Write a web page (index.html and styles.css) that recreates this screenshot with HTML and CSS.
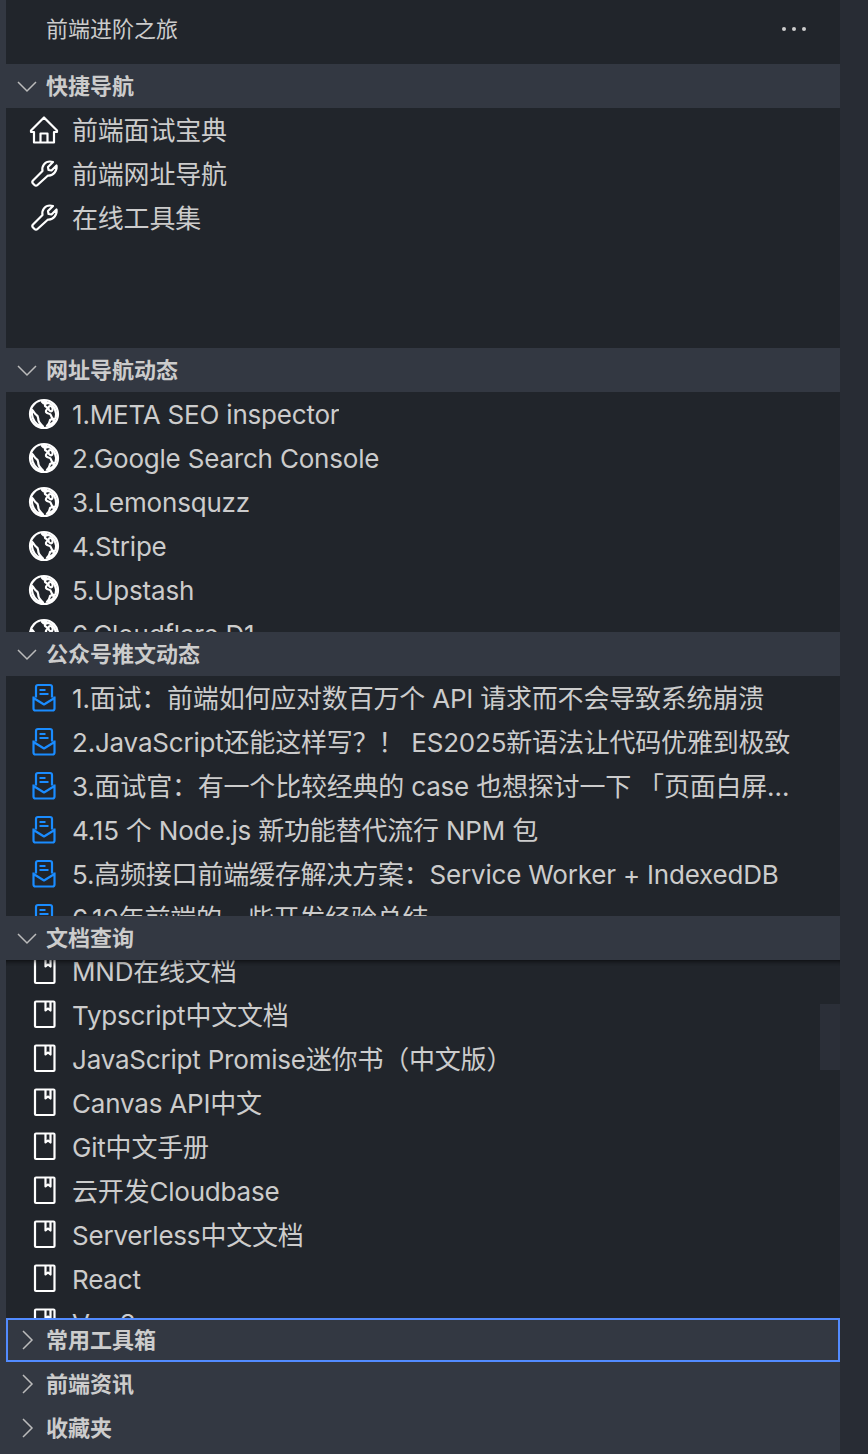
FILE: index.html
```html
<!DOCTYPE html>
<html lang="zh-CN">
<head>
  <meta charset="UTF-8">
  <meta name="viewport" content="width=device-width, initial-scale=1.0">
  <title>前端进阶之旅</title>
  <link rel="stylesheet" href="styles.css">
</head>
<body>
  <svg class="sprites" aria-hidden="true">
    <symbol id="i-open" viewBox="0 0 24 24"><path d="M3 8 12 17l9-9" /></symbol>
    <symbol id="i-closed" viewBox="0 0 24 24"><path d="M8 3 17 12 8 21" /></symbol>
    <symbol id="i-home" viewBox="0 0 32 32"><path d="M16 3.500 3 16.500v1.500h3v10.500h20V18h3v-1.500zM12.500 28.500V19.500h7v9" /></symbol>
    <symbol id="i-tool" viewBox="0 0 32 32"><path d="M5 22.500 14.500 13C13.500 8 17 3.500 22 3.500c1 0 2 .2 3 .5l-5 5 .5 3 3 .5 5-5c1 5-3 10.500-8.500 10L9.500 27c-1 1-2 1-3 0L5 25.500c-1-1-1-2 0-3z" /></symbol>
    <symbol id="i-globe" viewBox="0 0 32 32">
      <circle class="solid" cx="16" cy="16" r="14" />
      <path class="sea" d="M14 3.800c1 1.500 3 2.200 4.500 1.700V3.800zM20.500 4.800C18 5 16.500 6.500 17 8c1 1 2.500 1 2.500 2.500-.5 1.500-2 1.500-1.500 3.500 1 2 3 1 4.500 2.500 1 1.500 1 3.500 2.500 4.500l2.500-.5C29.500 14 26 7 20.500 4.800zM4.300 12C3 17 5 23 9.500 26.500c1.500 1 3.500 1.500 5.500 1.900-2-2.400-4-3.400-4.500-5.900-.5-2.500 0-4.500-2-5.500S6 13.500 4.300 12zM26.800 22.500c-1.800-1-3.800-1.500-4.800-.5-.5 2-.5 4-3 5.600 3.500-.6 6-2.600 7.800-5.100z" />
      <path class="solid" d="M22 8c2 0 3 2 2.500 4s-2.500 1.500-3.500 0-.5-4 1-4z" />
    </symbol>
    <symbol id="i-mail" viewBox="0 0 32 32">
      <path d="M8 15.500V5a2 2 0 0 1 2-2h12a2 2 0 0 1 2 2v10.500M5.500 14.500v12a2 2 0 0 0 2 2h17a2 2 0 0 0 2-2v-12M5.500 16 16 22.500 26.500 16" />
      <path d="M11.500 8h6M11.500 12h9" />
    </symbol>
    <symbol id="i-book" viewBox="0 0 32 32"><rect x="7" y="2.500" width="19.500" height="25.500" rx="1" /><path d="M17.500 2.500v9l2.500-2 2.500 2v-9" /></symbol>
  </svg>

  <div class="window">
    <div class="rail"></div>

    <main class="sidebar">
      <header class="title-bar">
        <span class="title">前端进阶之旅</span>
        <span class="more"><i></i><i></i><i></i></span>
      </header>

      <section class="panel">
        <h2 class="panel-head"><svg class="chev"><use href="#i-open"/></svg>快捷导航</h2>
        <div class="panel-body h-240">
          <div class="row"><svg class="ico"><use href="#i-home"/></svg><span>前端面试宝典</span></div>
          <div class="row"><svg class="ico"><use href="#i-tool"/></svg><span>前端网址导航</span></div>
          <div class="row"><svg class="ico"><use href="#i-tool"/></svg><span>在线工具集</span></div>
        </div>
      </section>

      <section class="panel">
        <h2 class="panel-head"><svg class="chev"><use href="#i-open"/></svg>网址导航动态</h2>
        <div class="panel-body h-240">
          <div class="row"><svg class="ico"><use href="#i-globe"/></svg><span>1.META SEO inspector</span></div>
          <div class="row"><svg class="ico"><use href="#i-globe"/></svg><span>2.Google Search Console</span></div>
          <div class="row"><svg class="ico"><use href="#i-globe"/></svg><span>3.Lemonsquzz</span></div>
          <div class="row"><svg class="ico"><use href="#i-globe"/></svg><span>4.Stripe</span></div>
          <div class="row"><svg class="ico"><use href="#i-globe"/></svg><span>5.Upstash</span></div>
          <div class="row"><svg class="ico"><use href="#i-globe"/></svg><span>6.Cloudflare D1</span></div>
        </div>
      </section>

      <section class="panel">
        <h2 class="panel-head"><svg class="chev"><use href="#i-open"/></svg>公众号推文动态</h2>
        <div class="panel-body h-240">
          <div class="row"><svg class="ico blue"><use href="#i-mail"/></svg><span>1.面试：前端如何应对数百万个 API 请求而不会导致系统崩溃</span></div>
          <div class="row"><svg class="ico blue"><use href="#i-mail"/></svg><span>2.JavaScript还能这样写？！ ES2025新语法让代码优雅到极致</span></div>
          <div class="row"><svg class="ico blue"><use href="#i-mail"/></svg><span>3.面试官：有一个比较经典的 case 也想探讨一下 「页面白屏如何排查」</span></div>
          <div class="row"><svg class="ico blue"><use href="#i-mail"/></svg><span>4.15 个 Node.js 新功能替代流行 NPM 包</span></div>
          <div class="row"><svg class="ico blue"><use href="#i-mail"/></svg><span>5.高频接口前端缓存解决方案：Service Worker + IndexedDB</span></div>
          <div class="row"><svg class="ico blue"><use href="#i-mail"/></svg><span>6.10年前端的一些开发经验总结</span></div>
        </div>
      </section>

      <section class="panel">
        <h2 class="panel-head"><svg class="chev"><use href="#i-open"/></svg>文档查询</h2>
        <div class="panel-body h-358 scrolled">
          <div class="row"><svg class="ico"><use href="#i-book"/></svg><span>MND在线文档</span></div>
          <div class="row"><svg class="ico"><use href="#i-book"/></svg><span>Typscript中文文档</span></div>
          <div class="row"><svg class="ico"><use href="#i-book"/></svg><span>JavaScript Promise迷你书（中文版）</span></div>
          <div class="row"><svg class="ico"><use href="#i-book"/></svg><span>Canvas API中文</span></div>
          <div class="row"><svg class="ico"><use href="#i-book"/></svg><span>Git中文手册</span></div>
          <div class="row"><svg class="ico"><use href="#i-book"/></svg><span>云开发Cloudbase</span></div>
          <div class="row"><svg class="ico"><use href="#i-book"/></svg><span>Serverless中文文档</span></div>
          <div class="row"><svg class="ico"><use href="#i-book"/></svg><span>React</span></div>
          <div class="row"><svg class="ico"><use href="#i-book"/></svg><span>Vue3</span></div>
          <div class="thumb"></div>
        </div>
      </section>

      <section class="panel">
        <h2 class="panel-head focused"><svg class="chev"><use href="#i-closed"/></svg>常用工具箱</h2>
      </section>
      <section class="panel">
        <h2 class="panel-head"><svg class="chev"><use href="#i-closed"/></svg>前端资讯</h2>
      </section>
      <section class="panel">
        <h2 class="panel-head"><svg class="chev"><use href="#i-closed"/></svg>收藏夹</h2>
      </section>
      <div class="tail"></div>
    </main>

    <div class="gutter"></div>
  </div>
</body>
</html>
```

FILE: styles.css
```css
body {
  margin: 0;
  background-color: #21252b;
  font-family: Inter, "Noto Sans CJK SC", sans-serif;
  color: #ccc;
}
.sprites {
  display: none;
}
.window {
  display: flex;
  height: 1454px;
  overflow: hidden;
}
.rail {
  width: 6px;
  background-color: #333842;
}
.gutter {
  width: 28px;
  background-color: #282c34;
}
.sidebar {
  flex: 1;
  display: flex;
  flex-direction: column;
  min-width: 0;
  background-color: #21252b;
}
.title-bar {
  height: 64px;
  padding: 0 34px 6px 40px;
  box-sizing: border-box;
  display: flex;
  align-items: center;
  justify-content: space-between;
}
.title {
  font-size: 22px;
  line-height: 28px;
}
.more {
  display: flex;
  gap: 6px;
}
.more i {
  width: 4px;
  height: 4px;
  border-radius: 50%;
  background-color: #ccc;
}
.panel-head {
  height: 44px;
  margin: 0;
  padding-left: 9px;
  box-sizing: border-box;
  display: flex;
  align-items: center;
  gap: 7px;
  background-color: #333842;
  font-size: 22px;
  line-height: 28px;
  font-weight: bold;
}
.focused {
  outline: 2px solid #528bff;
  outline-offset: -2px;
}
.chev {
  width: 24px;
  height: 24px;
  fill: none;
  stroke: #bbb;
  stroke-width: 1.5;
}
.panel-body {
  position: relative;
  overflow: hidden;
}
.h-240 {
  height: 240px;
}
.h-358 {
  height: 358px;
}
.scrolled .row:first-child {
  margin-top: -11px;
}
.scrolled::before {
  content: "";
  position: absolute;
  top: 0;
  left: 0;
  right: 0;
  height: 6px;
  z-index: 1;
  box-shadow: inset 0 6px 6px -6px #000;
}
.thumb {
  position: absolute;
  top: 44px;
  right: 0;
  width: 20px;
  height: 66px;
  background-color: #2b2f38;
}
.row {
  height: 44px;
  padding: 0 48px 0 22px;
  display: flex;
  align-items: center;
  gap: 12px;
  font-size: 26px;
  line-height: 36px;
  letter-spacing: -0.2px;
}
.row span {
  padding-top: 2px;
  overflow: hidden;
  white-space: nowrap;
  text-overflow: ellipsis;
}
.ico {
  flex: none;
  width: 32px;
  height: 32px;
  fill: none;
  stroke: #fff;
  stroke-width: 2.2;
  stroke-linejoin: round;
}
.ico .solid {
  fill: #e4e4e4;
  stroke: none;
}
.ico .sea {
  fill: #21252b;
  stroke: none;
}
.blue {
  stroke: #1a8cff;
}
.tail {
  flex: 1;
  background-color: #333842;
}
```
